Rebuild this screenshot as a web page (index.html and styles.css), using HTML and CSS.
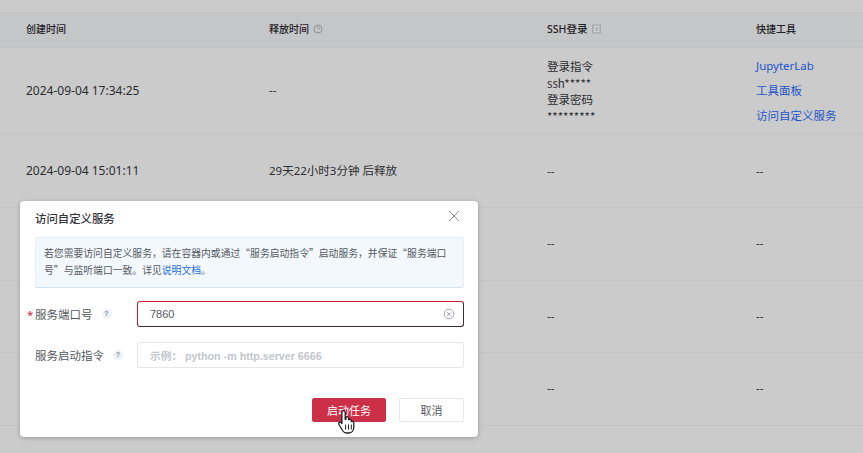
FILE: index.html
```html
<!DOCTYPE html>
<html lang="zh-CN">
<head>
<meta charset="utf-8">
<title>访问自定义服务</title>
<link rel="stylesheet" href="styles.css">
</head>
<body>
<div class="page">
  <div class="table">
    <div class="row head">
      <div class="cell">创建时间</div>
      <div class="cell">释放时间 <svg class="help" viewBox="0 0 10 10"><circle cx="5" cy="5" r="4" fill="none" stroke="#8f9296" stroke-width="1"/><path d="M3.8 4a1.2 1.2 0 1 1 1.8 1c-.4.3-.6.4-.6.9M5 7.2v.4" fill="none" stroke="#8f9296" stroke-width=".8"/></svg></div>
      <div class="cell"><span class="ssh">SSH登录</span> <svg class="copy" viewBox="0 0 10 10"><rect x="0.5" y="0.5" width="9" height="9" fill="#b4b6b8" stroke="#a6a8aa"/><rect x="3" y="2" width="4.5" height="6" fill="none" stroke="#dcdcdc" stroke-width=".8"/></svg></div>
      <div class="cell">快捷工具</div>
    </div>
    <div class="row first">
      <div class="cell date">2024-09-04 17:34:25</div>
      <div class="cell">--</div>
      <div class="cell stack">
        <span>登录指令</span><span>ssh*****</span><span>登录密码</span><span>*********</span>
      </div>
      <div class="cell links">
        <a>JupyterLab</a><a>工具面板</a><a>访问自定义服务</a>
      </div>
    </div>
    <div class="row second">
      <div class="cell date">2024-09-04 15:01:11</div>
      <div class="cell">29天22小时3分钟 后释放</div>
      <div class="cell">--</div>
      <div class="cell">--</div>
    </div>
    <div class="row plain"><div class="cell"></div><div class="cell"></div><div class="cell">--</div><div class="cell">--</div></div>
    <div class="row plain"><div class="cell"></div><div class="cell"></div><div class="cell">--</div><div class="cell">--</div></div>
    <div class="row plain"><div class="cell"></div><div class="cell"></div><div class="cell">--</div><div class="cell">--</div></div>
  </div>

  <div class="modal">
    <div class="modal-head">
      <span class="modal-title">访问自定义服务</span>
      <svg class="close" viewBox="0 0 12 12"><path d="M1 1l10 10M11 1L1 11" fill="none" stroke="#8a8d91" stroke-width="1"/></svg>
    </div>
    <div class="notice">
      <div class="notice-line">若您需要访问自定义服务，请在容器内或通过“服务启动指令”启动服务，并保证“服务端口</div>
      <div class="notice-line"><span>号”与监听端口一致。详见</span><a>说明文档</a><span>。</span></div>
    </div>
    <div class="field port">
      <label class="label"><span class="req">*</span>服务端口号<i class="q">?</i></label>
      <div class="input active">
        <span>7860</span>
        <svg class="clear" viewBox="0 0 12 12"><circle cx="6" cy="6" r="4.8" fill="none" stroke="#a5a8ad" stroke-width="1"/><path d="M4.2 4.2l3.6 3.6M7.800 4.2L4.2 7.8" fill="none" stroke="#a5a8ad" stroke-width="1"/></svg>
      </div>
    </div>
    <div class="field cmd">
      <label class="label">服务启动指令<i class="q">?</i></label>
      <div class="input placeholder">示例： python -m http.server 6666</div>
    </div>
    <div class="actions">
      <button class="btn primary">启动任务</button>
      <button class="btn">取消</button>
    </div>
  </div>
  <svg class="cursor" viewBox="0 0 20 26"><path d="M6.500 2.200c1 0 1.700.7 1.700 1.700v7l.7-.1V8.600c1.600-.7 2.600 0 2.700 1.200v1.400c1.500-.8 2.500-.2 2.700 1v1c1.500-.6 2.400 0 2.500 1.300v4c0 3-1.700 6-5 6H9.500c-2 0-3-1-4-2.500L2 16c-1-1.700.8-3 2.200-1.800l.7.800V3.900c0-1 .7-1.700 1.600-1.700z" fill="#fff" stroke="#222" stroke-width="1.300" stroke-linejoin="round"/><path d="M8.600 16v5M11.500 16v5M14.300 16v5" stroke="#222" stroke-width="1" fill="none"/></svg>
</div>
</body>
</html>
```
FILE: styles.css
```css
* { box-sizing: border-box; }
html, body { margin: 0; padding: 0; }
body {
  width: 863px;
  height: 453px;
  overflow: hidden;
  background: #cbcbcb;
  font-family: "Noto Sans", "Noto Sans CJK SC", sans-serif;
  color: #2b2d30;
}
.page { position: relative; width: 863px; height: 453px; padding-top: 12px; }
.table { display: flex; flex-direction: column; font-size: 11.500px; }
.row {
  display: grid;
  grid-template-columns: 243px 278px 209px 1fr;
  padding-left: 26px;
  padding-bottom: 2px;
  border-bottom: 1px solid #c2c3c4;
  align-items: center;
}
.head { height: 36px; background: #c5c6c8; font-size: 10px; color: #1f2126; font-weight: 500; }
.first { height: 86px; }
.first .date { padding-top: 2px; }
.second { height: 74px; padding-bottom: 0; }
.plain { height: 72.700px; }
.cell { display: flex; align-items: center; gap: 4px; white-space: nowrap; line-height: 16px; }
.date { font-size: 12px; }
.help { width: 10px; height: 10px; }
.ssh { font-size: 10.500px; }
.copy { width: 9px; height: 10px; margin-left: 1px; }
.stack {
  flex-direction: column;
  align-items: flex-start;
  gap: 0;
  padding-top: 3px;
  line-height: 16.500px;
  font-family: "Noto Sans CJK SC", sans-serif;
}
.links { flex-direction: column; align-items: flex-start; gap: 0; padding-top: 1px; line-height: 25px; color: #1f56c9; }

.modal {
  position: absolute;
  left: 20px;
  top: 201px;
  width: 458px;
  height: 236px;
  background: #fff;
  border-radius: 4px;
  box-shadow: 0 1px 4px rgba(0, 0, 0, .25);
  padding: 0 14px 0 15px;
  display: flex;
  flex-direction: column;
}
.modal-head { display: flex; justify-content: space-between; align-items: center; height: 36px; padding: 0 4px 2px 0; }
.modal-title { font-size: 11.400px; color: #33353a; font-weight: 500; }
.close { width: 12px; height: 12px; margin-top: -4px; }
.notice {
  height: 51px;
  padding: 7px 8px;
  background: #f3f8fe;
  border: 1px solid #e3eef8;
  border-bottom-color: #cfe5f5;
  border-radius: 2px;
  font-family: "Noto Sans CJK SC", sans-serif;
  font-size: 9.820px;
  line-height: 17px;
  color: #55585d;
}
.notice-line { white-space: nowrap; }
.notice a { color: #1f6fd6; }
.field { display: flex; align-items: center; }
.port { margin-top: 13px; }
.cmd { margin-top: 15px; }
.label { width: 102px; flex: none; position: relative; font-size: 11.500px; color: #55585d; display: flex; align-items: center; }
.req { position: absolute; left: -8px; color: #c8283f; }
.q {
  width: 10px; height: 10px; margin-left: 9px;
  border-radius: 50%;
  background: #eef1f6;
  color: #8b8f96;
  font: bold 7px/10px "Liberation Sans", sans-serif;
  text-align: center;
}
.input {
  flex: 1;
  height: 26px;
  padding: 0 12px;
  display: flex;
  align-items: center;
  justify-content: space-between;
  font-size: 11px;
  border: 1px solid #e6e7ea;
  border-radius: 2px;
  color: #55585d;
  font-family: "Liberation Sans", "Noto Sans CJK SC", sans-serif;
}
.input.active {
  border-color: #3d2c30;
  border-top-color: #d0203a;
  border-left-color: #b0203a;
  padding-right: 8px;
  border-radius: 3px;
}
.clear { width: 12px; height: 12px; }
.placeholder { color: #c3c6cb; font-weight: bold; font-size: 10.700px; }
.actions { display: flex; justify-content: flex-end; gap: 13px; margin-top: 30px; }
.btn {
  width: 65px;
  height: 24px;
  padding: 0;
  font: 11px "Noto Sans CJK SC", sans-serif;
  color: #55585d;
  background: #fff;
  border: 1px solid #e6e7ea;
  border-radius: 2px;
}
.btn.primary { width: 74px; background: #cc3048; border-color: #cc3048; color: #fff; }
.cursor { position: absolute; left: 337px; top: 408px; width: 20px; height: 27px; }
```
